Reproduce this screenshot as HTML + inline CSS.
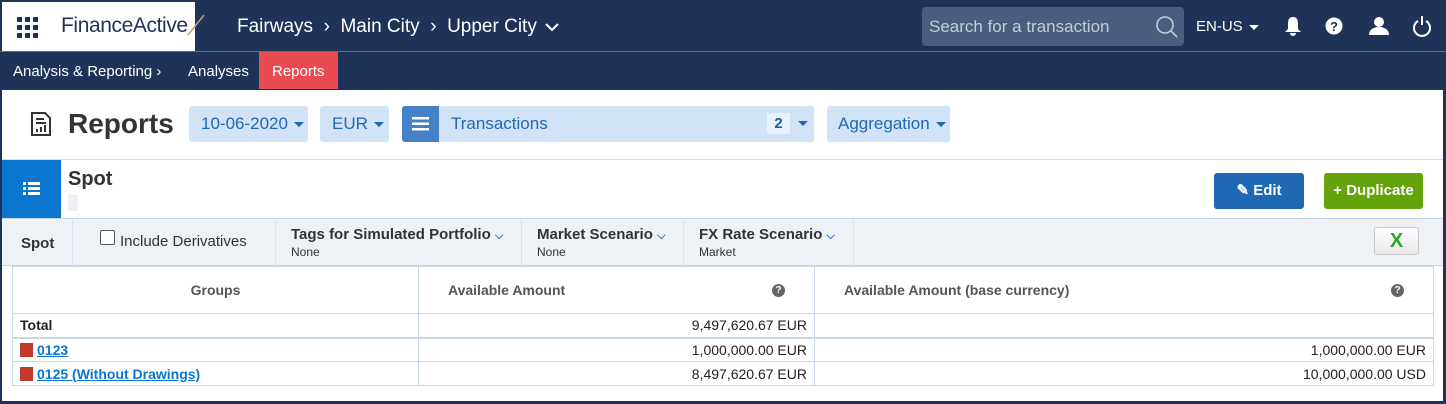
<!DOCTYPE html>
<html><head><meta charset="utf-8"><style>
*{box-sizing:border-box;margin:0;padding:0}
body{width:1446px;height:404px;overflow:hidden;background:#1f3358;font-family:"Liberation Sans",Arial,sans-serif;position:relative}
.a{position:absolute}
.nav{left:0;top:0;width:1446px;height:90px;background:#1f3358}
.white{left:2px;top:90px;width:1441px;height:311px;background:#fff}
.t{color:#fff;white-space:nowrap}
.chip{background:#d2e3f7;border-radius:3px;color:#1f68b4;font-size:17px;height:36px;line-height:36px;top:106px}
.car{display:inline-block;width:0;height:0;border-left:5px solid transparent;border-right:5px solid transparent;border-top:5px solid #1f68b4;vertical-align:middle;margin-left:6px}
.fb{font-size:15px;font-weight:bold;color:#333}
.fs{font-size:12px;color:#333}
.chev{color:#2a7ad0;font-size:11px}
table{border-collapse:collapse;position:absolute;left:12px;top:266px;width:1422px;font-size:14px;color:#222}
td{border:1px solid #c9d6e6;height:24px;padding:0 7px}
.q{float:right;margin-right:22px;width:13px;height:13px;border-radius:50%;background:#666;color:#fff;font-size:10px;line-height:13px;text-align:center;margin-top:2px}
</style></head><body>
<div class="a nav"></div>
<div class="a" style="left:2px;top:2px;width:193px;height:49px;background:#fff"></div>
<div class="a" style="left:0;top:51px;width:1446px;height:1px;background:#c9464f"></div>
<svg class="a" style="left:17px;top:17px" width="21" height="21"><g fill="#1f3358"><rect x="0" y="0" width="5" height="5"/><rect x="8" y="0" width="5" height="5"/><rect x="16" y="0" width="5" height="5"/><rect x="0" y="8" width="5" height="5"/><rect x="8" y="8" width="5" height="5"/><rect x="16" y="8" width="5" height="5"/><rect x="0" y="16" width="5" height="5"/><rect x="8" y="16" width="5" height="5"/><rect x="16" y="16" width="5" height="5"/></g></svg>
<div class="a" style="left:61px;top:14px;font-size:21px;color:#1f3358;white-space:nowrap;letter-spacing:-0.4px">FinanceActive<svg width="20" height="22" style="vertical-align:-4px;margin-left:-2px"><line x1="2" y1="21" x2="18" y2="1" stroke="#b9a36a" stroke-width="1.5"/></svg></div>
<div class="a t" style="left:237px;top:16px;font-size:19px">Fairways &nbsp;›&nbsp; Main City &nbsp;›&nbsp; Upper City <svg width="14" height="10" style="vertical-align:0px;margin-left:3px"><path d="M1 2l6 6 6-6" fill="none" stroke="#fff" stroke-width="2"/></svg></div>
<div class="a" style="left:922px;top:7px;width:262px;height:39px;background:#4a5d7e;border-radius:4px"></div>
<div class="a" style="left:929px;top:17px;font-size:17px;color:#c4ccd8">Search for a transaction</div>
<svg class="a" style="left:1155px;top:15px" width="24" height="24"><circle cx="10" cy="10" r="8" fill="none" stroke="#c4ccd8" stroke-width="1.6"/><line x1="16" y1="16" x2="22" y2="22" stroke="#c4ccd8" stroke-width="1.6"/></svg>
<div class="a t" style="left:1196px;top:18px;font-size:15px">EN-US <span style="display:inline-block;border-left:5px solid transparent;border-right:5px solid transparent;border-top:5px solid #fff;vertical-align:middle;margin-left:2px"></span></div>
<svg class="a" style="left:1284px;top:16px" width="18" height="20"><path d="M9 1c-4 0-5 3-5 7v5l-3 3h16l-3-3V8c0-4-1-7-5-7z M6 17a3 3 0 0 0 6 0z" fill="#fff"/></svg>
<svg class="a" style="left:1325px;top:17px" width="18" height="18"><circle cx="9" cy="9" r="8.5" fill="#fff"/><text x="9" y="14" font-size="13" font-weight="bold" text-anchor="middle" fill="#1f3358" font-family="Liberation Sans">?</text></svg>
<svg class="a" style="left:1369px;top:16px" width="20" height="20"><circle cx="10" cy="6" r="5" fill="#fff"/><path d="M0 19c0-5 4-8 10-8s10 3 10 8z" fill="#fff"/></svg>
<svg class="a" style="left:1412px;top:15px" width="20" height="22"><path d="M6 6a8 8 0 1 0 8 0" fill="none" stroke="#fff" stroke-width="2"/><line x1="10" y1="1" x2="10" y2="10" stroke="#fff" stroke-width="2"/></svg>
<div class="a t" style="left:13px;top:63px;font-size:15px">Analysis &amp; Reporting ›</div>
<div class="a t" style="left:188px;top:63px;font-size:15px">Analyses</div>
<div class="a" style="left:259px;top:52px;width:79px;height:37px;background:#e84c52"></div>
<div class="a t" style="left:272px;top:63px;font-size:15px">Reports</div>
<div class="a white"></div>
<svg class="a" style="left:30px;top:112px" width="22" height="24"><path d="M2 1h13l5 5v17H2z" fill="none" stroke="#333" stroke-width="2"/><g fill="#333"><rect x="6" y="6" width="8" height="2"/><rect x="6" y="10" width="10" height="2"/><rect x="6" y="17" width="2" height="3"/><rect x="10" y="15" width="2" height="5"/><rect x="14" y="13" width="2" height="7"/></g></svg>
<div class="a" style="left:68px;top:108px;font-size:28px;font-weight:bold;color:#333">Reports</div>
<div class="a chip" style="left:189px;width:119px;padding-left:12px">10-06-2020<span class="car"></span></div>
<div class="a chip" style="left:320px;width:69px;padding-left:12px">EUR<span class="car"></span></div>
<div class="a chip" style="left:402px;width:412px"></div>
<div class="a" style="left:402px;top:106px;width:37px;height:36px;background:#4581c6;border-radius:3px 0 0 3px"></div>
<svg class="a" style="left:412px;top:116px" width="17" height="15"><g fill="#fff"><rect y="1" width="17" height="2.5"/><rect y="6.5" width="17" height="2.5"/><rect y="12" width="17" height="2.5"/></g></svg>
<div class="a" style="left:451px;top:106px;line-height:36px;font-size:17px;color:#1f68b4">Transactions</div>
<div class="a" style="left:767px;top:113px;width:23px;height:21px;background:#e9f1fb;border-radius:2px;text-align:center;line-height:21px;font-weight:bold;font-size:15px;color:#1f5a99">2</div>
<div class="a" style="left:792px;top:106px;line-height:36px"><span class="car"></span></div>
<div class="a chip" style="left:827px;width:123px;padding-left:11px">Aggregation<span class="car"></span></div>
<div class="a" style="left:2px;top:159px;width:1441px;height:1px;background:#d5dde8"></div>
<div class="a" style="left:2px;top:160px;width:59px;height:58px;background:#0b76cf"></div>
<svg class="a" style="left:23px;top:182px" width="17" height="14"><g fill="#fff"><rect y="0" width="3" height="3"/><rect x="5" y="0" width="12" height="3"/><rect y="5" width="3" height="3"/><rect x="5" y="5" width="12" height="3"/><rect y="10" width="3" height="3"/><rect x="5" y="10" width="12" height="3"/></g></svg>
<div class="a" style="left:68px;top:168px;font-size:20px;font-weight:bold;color:#333">Spot</div>
<div class="a" style="left:68px;top:195px;width:10px;height:16px;background:#eceff3;border-radius:2px"></div>
<div class="a" style="left:1214px;top:173px;width:90px;height:36px;background:#1f68b4;border-radius:3px;color:#fff;font-weight:bold;font-size:15px;line-height:36px;text-align:center">✎ Edit</div>
<div class="a" style="left:1324px;top:173px;width:99px;height:36px;background:#65a30d;border-radius:3px;color:#fff;font-weight:bold;font-size:15px;line-height:36px;text-align:center">+ Duplicate</div>
<div class="a" style="left:2px;top:218px;width:1441px;height:48px;background:#eef1f6;border-top:1px solid #c9d6e6;border-bottom:1px solid #c9d6e6"></div>
<div class="a fb" style="left:21px;top:235px">Spot</div>
<div class="a" style="left:72px;top:219px;width:1px;height:46px;background:#dde3ec"></div>
<div class="a" style="left:100px;top:230px;width:15px;height:15px;border:1px solid #555;border-radius:2px;background:#fff"></div>
<div class="a" style="left:120px;top:233px;font-size:15px;color:#333">Include Derivatives</div>
<div class="a" style="left:275px;top:219px;width:1px;height:46px;background:#dde3ec"></div>
<div class="a fb" style="left:291px;top:226px">Tags for Simulated Portfolio <span class="chev">⌵</span></div>
<div class="a fs" style="left:291px;top:245px">None</div>
<div class="a" style="left:521px;top:219px;width:1px;height:46px;background:#dde3ec"></div>
<div class="a fb" style="left:537px;top:226px">Market Scenario <span class="chev">⌵</span></div>
<div class="a fs" style="left:537px;top:245px">None</div>
<div class="a" style="left:683px;top:219px;width:1px;height:46px;background:#dde3ec"></div>
<div class="a fb" style="left:699px;top:226px">FX Rate Scenario <span class="chev">⌵</span></div>
<div class="a fs" style="left:699px;top:245px">Market</div>
<div class="a" style="left:853px;top:219px;width:1px;height:46px;background:#dde3ec"></div>
<div class="a" style="left:1374px;top:227px;width:45px;height:28px;background:linear-gradient(#fff,#e8e8e8);border:1px solid #c8c8c8;border-radius:3px;text-align:center;line-height:26px;font-weight:bold;font-size:20px;color:#2aa62a">X</div>
<table>
<tr style="height:47px;font-weight:bold;color:#555"><td style="width:406px;text-align:center">Groups</td><td style="width:396px;padding-left:29px">Available Amount<span class="q">?</span></td><td style="padding-left:29px">Available Amount (base currency)<span class="q">?</span></td></tr>
<tr><td style="font-weight:bold">Total</td><td style="text-align:right">9,497,620.67 EUR</td><td></td></tr>
<tr style="border-top:2px solid #c9d6e6"><td><span style="display:inline-block;width:13px;height:14px;background:#c0392b;vertical-align:-2px;margin-right:4px"></span><a style="color:#0b76cf;font-weight:bold;text-decoration:underline">0123</a></td><td style="text-align:right">1,000,000.00 EUR</td><td style="text-align:right">1,000,000.00 EUR</td></tr>
<tr><td><span style="display:inline-block;width:13px;height:14px;background:#c0392b;vertical-align:-2px;margin-right:4px"></span><a style="color:#0b76cf;font-weight:bold;text-decoration:underline">0125 (Without Drawings)</a></td><td style="text-align:right">8,497,620.67 EUR</td><td style="text-align:right">10,000,000.00 USD</td></tr>
</table>
</body></html>
